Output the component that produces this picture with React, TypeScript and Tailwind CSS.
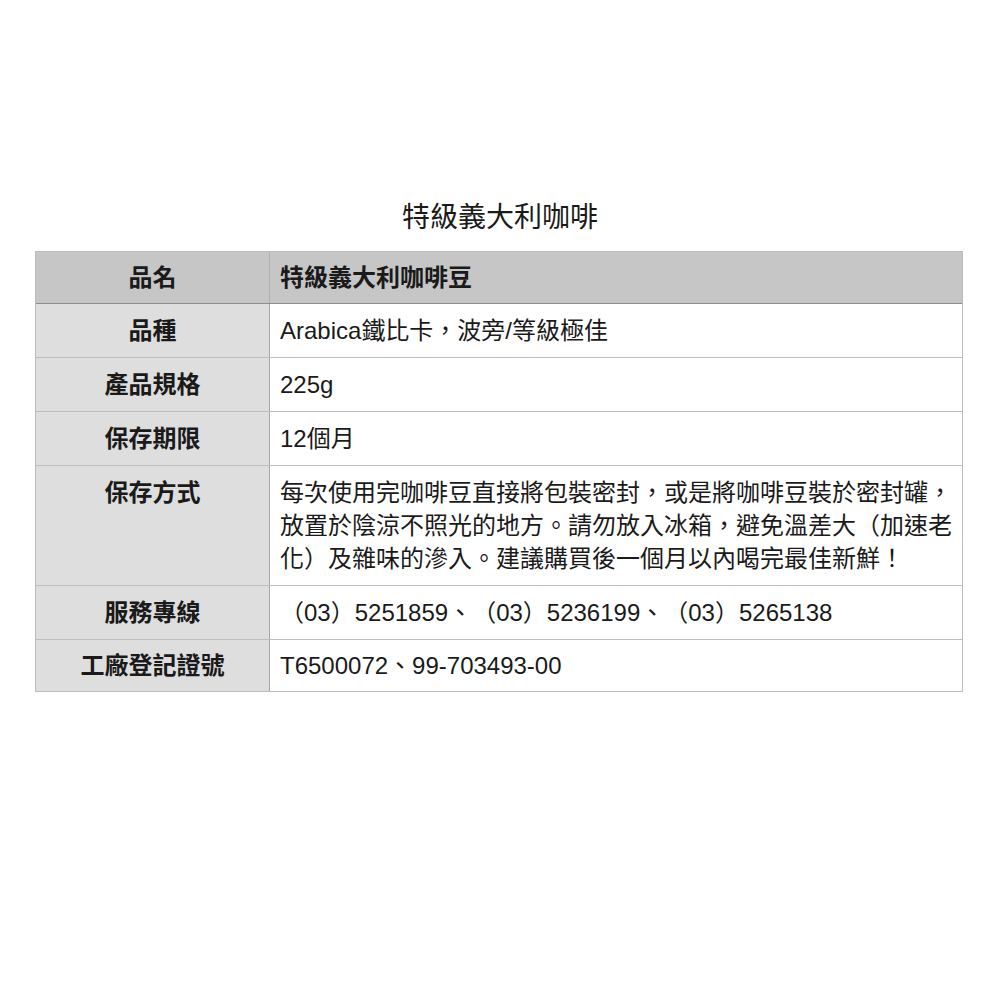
import React from "react";

const rows: { label: string; value: string }[] = [
  { label: "品種", value: "Arabica鐵比卡，波旁/等級極佳" },
  { label: "產品規格", value: "225g" },
  { label: "保存期限", value: "12個月" },
  {
    label: "保存方式",
    value:
      "每次使用完咖啡豆直接將包裝密封，或是將咖啡豆裝於密封罐，放置於陰涼不照光的地方。請勿放入冰箱，避免溫差大（加速老化）及雜味的滲入。建議購買後一個月以內喝完最佳新鮮！",
  },
  { label: "服務專線", value: "（03）5251859、（03）5236199、（03）5265138" },
  { label: "工廠登記證號", value: "T6500072、99-703493-00" },
];

export default function App() {
  return (
    <div
      className="w-[1000px] h-[1000px] bg-white text-[#1a1a1a] [text-spacing-trim:space-all]"
      style={{ fontFamily: '"Liberation Sans", "Noto Sans CJK TC", sans-serif' }}
    >
      <div className="pt-[198px] text-center text-[28px] leading-[40px]">特級義大利咖啡</div>
      <div className="mt-[13px] ml-[35px] w-[928px] border border-[#bdbdbd] text-[24px] leading-[33px]">
        <div className="flex bg-[#c6c6c6] border-b border-[#8e8e8e]">
          <div className="w-[234px] shrink-0 border-r border-[#b0b0b0] py-[9px] text-center font-bold">品名</div>
          <div className="flex-1 py-[9px] pl-[10px] font-bold">特級義大利咖啡豆</div>
        </div>
        {rows.map((r, i) => {
          const last = i === rows.length - 1;
          return (
            <div key={r.label} className={`flex ${last ? "" : "border-b border-[#bdbdbd]"}`}>
              <div
                className={`w-[234px] shrink-0 bg-[#dedede] border-r border-[#a8a8a8] text-center font-bold ${
                  last ? "py-[9px]" : "py-[10px]"
                }`}
              >
                {r.label}
              </div>
              <div className={`flex-1 pl-[10px] pr-[8px] bg-white ${last ? "py-[9px]" : "py-[10px]"}`}>
                {r.value}
              </div>
            </div>
          );
        })}
      </div>
    </div>
  );
}
